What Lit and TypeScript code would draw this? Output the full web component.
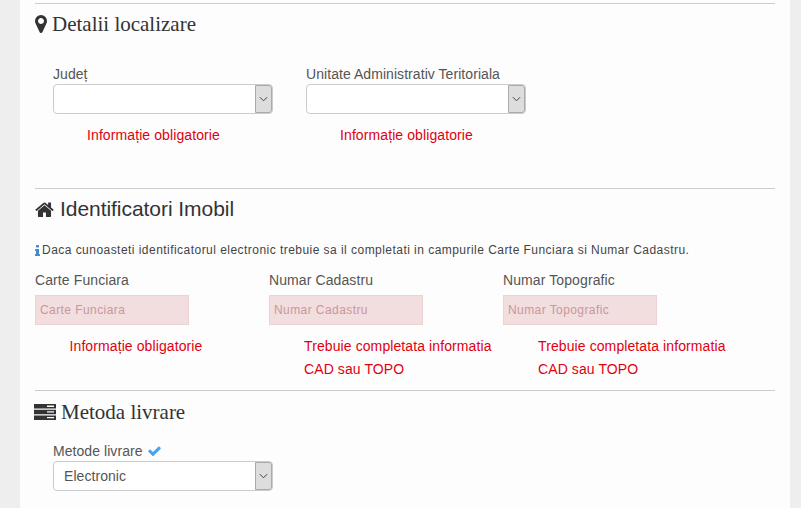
import { LitElement, html, css } from "lit";
import { customElement } from "lit/decorators.js";

const chevron = html`<svg class="chev" viewBox="0 0 10 6" width="9" height="6"><path d="M1 1l4 4 4-4" fill="none" stroke="#444" stroke-width="1.1"/></svg>`;

@customElement("app-root")
export class AppRoot extends LitElement {
  static styles = css`
    :host {
      display: block;
      height: 508px;
      overflow: hidden;
      background: #eee;
      font-family: "Liberation Sans", Arial, sans-serif;
      font-size: 14px;
      color: #555;
    }
    .panel {
      margin: 0 11px 0 20px;
      height: 508px;
      padding: 3px 15px 0;
      background: #fdfdfd;
      box-sizing: border-box;
    }
    .rule {
      height: 1px;
      background: #ccc;
    }
    h3 {
      margin: 0;
      font-weight: 400;
      font-size: 21px;
      line-height: 24px;
      color: #333;
      display: flex;
      align-items: center;
    }
    h3.serif {
      font-family: "Liberation Serif", "Times New Roman", serif;
    }
    .h-loc {
      margin-top: 8px;
      gap: 5px;
    }
    .h-id {
      margin-top: 8px;
      gap: 6px;
      letter-spacing: -0.05px;
    }
    .h-del {
      margin-top: 9px;
      margin-left: -1px;
      gap: 5px;
    }
    .loc-row {
      display: flex;
      margin-top: 28px;
      padding-left: 18px;
      gap: 33px;
      height: 124px;
    }
    .field {
      width: 220px;
    }
    label {
      display: block;
      line-height: 20px;
      color: #555;
      letter-spacing: 0.06px;
    }
    .select {
      display: flex;
      height: 30px;
      box-sizing: border-box;
      border: 1px solid #ccc;
      border-radius: 4px;
      background: #fff;
      color: #555;
      align-items: center;
      padding-left: 10px;
      letter-spacing: 0.06px;
    }
    .select span {
      flex: 1;
    }
    .btn {
      width: 17px;
      height: 28px;
      box-sizing: border-box;
      background: #ddd;
      border: 1px solid #aaa;
      border-radius: 0 3px 3px 0;
      display: flex;
      align-items: center;
      justify-content: center;
    }
    .err {
      color: #e2000f;
      line-height: 23px;
      letter-spacing: 0.1px;
    }
    .loc-err {
      margin-top: 10px;
      padding-left: 34px;
    }
    .note {
      margin-top: 21px;
      font-size: 12px;
      line-height: 17px;
      color: #444;
      letter-spacing: 0.46px;
      display: flex;
      gap: 2px;
      align-items: center;
    }
    .id-row {
      display: flex;
      margin-top: 11px;
      height: 120px;
    }
    .id-col {
      width: 234px;
    }
    .id-col label {
      line-height: 20px;
      letter-spacing: 0.1px;
    }
    .input {
      margin-top: 5px;
      width: 154px;
      height: 30px;
      box-sizing: border-box;
      background: #f2dede;
      border: 1px solid #ebd3d3;
      color: #c9979b;
      font-size: 12px;
      letter-spacing: 0.42px;
      line-height: 28px;
      padding-left: 4px;
    }
    .id-err {
      margin-top: 10px;
      padding-left: 35px;
    }
    .id-err.first {
      padding-left: 34.5px;
    }
    .del {
      padding-left: 18px;
      margin-top: 17px;
    }
    .del label {
      display: flex;
      align-items: center;
      gap: 5px;
    }
    .del .select {
      width: 220px;
    }
  `;

  render() {
    return html`
      <div class="panel">
        <div class="rule"></div>
        <h3 class="serif h-loc">
          <svg width="12" height="18" viewBox="0 128 1024 1536"><path fill="#333" d="M768 640q0-106-75-181t-181-75-181 75-75 181 75 181 181 75 181-75 75-181zm256 0q0 109-33 179l-364 774q-16 33-47.500 52t-67.500 19-67.500-19-46.500-52l-365-774q-33-70-33-179 0-212 150-362t362-150 362 150 150 362z"/></svg>
          Detalii localizare
        </h3>
        <div class="loc-row">
          <div class="field">
            <label>Județ</label>
            <div class="select"><span></span><div class="btn">${chevron}</div></div>
            <div class="err loc-err">Informație obligatorie</div>
          </div>
          <div class="field">
            <label>Unitate Administrativ Teritoriala</label>
            <div class="select"><span></span><div class="btn">${chevron}</div></div>
            <div class="err loc-err">Informație obligatorie</div>
          </div>
        </div>
        <div class="rule"></div>
        <h3 class="h-id">
          <svg width="19" height="15" viewBox="0 220 1664 1320"><path fill="#333" d="M1408 992v480q0 26-19 45t-45 19h-384v-384h-256v384h-384q-26 0-45-19t-19-45v-480q0-1 .5-3t.5-3l575-474 575 474q1 2 1 6zm223-69l-62 74q-8 9-21 11h-3q-13 0-21-7l-692-577-692 577q-12 8-24 7-13-2-21-11l-62-74q-8-10-7-23.500t11-21.500l719-599q32-26 76-26t76 26l244 204v-195q0-14 9-23t23-9h192q14 0 23 9t9 23v408l219 182q10 8 11 21.500t-7 23.500z"/></svg>
          Identificatori Imobil
        </h3>
        <div class="note">
          <svg width="5" height="11" viewBox="0 48 640 1408"><path fill="#428bca" d="M640 1264v128q0 26-19 45t-45 19h-512q-26 0-45-19t-19-45v-128q0-26 19-45t45-19h64v-384h-64q-26 0-45-19t-19-45v-128q0-26 19-45t45-19h384q26 0 45 19t19 45v576h64q26 0 45 19t19 45zm-128-1152v192q0 26-19 45t-45 19h-256q-26 0-45-19t-19-45v-192q0-26 19-45t45-19h256q26 0 45 19t19 45z"/></svg>
          Daca cunoasteti identificatorul electronic trebuie sa il completati in campurile Carte Funciara si Numar Cadastru.
        </div>
        <div class="id-row">
          <div class="id-col">
            <label>Carte Funciara</label>
            <div class="input">Carte Funciara</div>
            <div class="err id-err first">Informație obligatorie</div>
          </div>
          <div class="id-col">
            <label>Numar Cadastru</label>
            <div class="input">Numar Cadastru</div>
            <div class="err id-err">Trebuie completata informatia<br />CAD sau TOPO</div>
          </div>
          <div class="id-col">
            <label>Numar Topografic</label>
            <div class="input">Numar Topografic</div>
            <div class="err id-err">Trebuie completata informatia<br />CAD sau TOPO</div>
          </div>
        </div>
        <div class="rule"></div>
        <h3 class="serif h-del">
          <svg width="22" height="16" viewBox="0 0 22 16"><path fill="#333" fill-rule="evenodd" d="M0 0h22v4.600H0zm13 1.500v1.400h7V1.500zM0 5.700h22v4.600H0zm13 1.500v1.400h7V7.200zM0 11.400h22V16H0zm13 1.500v1.400h7v-1.400z"/></svg>
          Metoda livrare
        </h3>
        <div class="del">
          <label>Metode livrare
            <svg width="13" height="10" viewBox="100 290 1600 1200"><path fill="#4da3ea" d="M1671 566q0 40-28 68l-724 724-136 136q-28 28-68 28t-68-28l-136-136-362-362q-28-28-28-68t28-68l136-136q28-28 68-28t68 28l294 295 656-657q28-28 68-28t68 28l136 136q28 28 28 68z"/></svg>
          </label>
          <div class="select"><span>Electronic</span><div class="btn">${chevron}</div></div>
        </div>
      </div>
    `;
  }
}
